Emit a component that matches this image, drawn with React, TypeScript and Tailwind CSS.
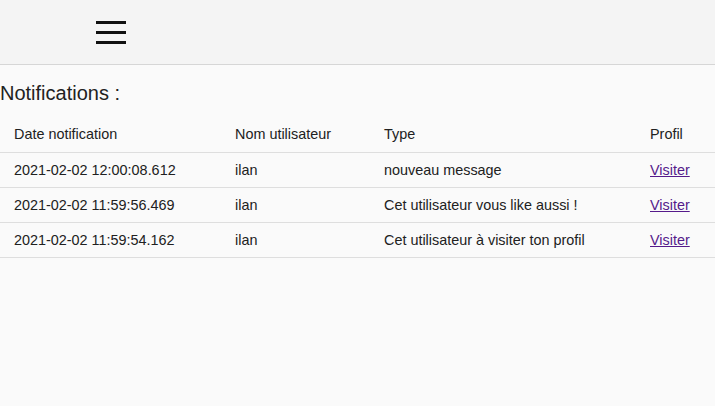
const notifications = [
  { date: "2021-02-02 12:00:08.612", user: "ilan", type: "nouveau message" },
  { date: "2021-02-02 11:59:56.469", user: "ilan", type: "Cet utilisateur vous like aussi !" },
  { date: "2021-02-02 11:59:54.162", user: "ilan", type: "Cet utilisateur à visiter ton profil" },
];

export default function App() {
  return (
    <div className="min-h-[406px] bg-[#fafafa] font-['Liberation_Sans',Arial,sans-serif] text-[#212121]">
      <header className="flex h-[65px] items-start border-b border-[#d6d6d6] bg-[#f4f4f4] pl-[96px] pt-[21px]">
        <button className="flex w-[30px] flex-col gap-[7px]" aria-label="Menu">
          <span className="block h-[3px] w-[30px] bg-[#111]" />
          <span className="block h-[3px] w-[30px] bg-[#111]" />
          <span className="block h-[3px] w-[30px] bg-[#111]" />
        </button>
      </header>
      <h2 className="mt-[16px] text-[20px] leading-[24px] text-[#222]">Notifications :</h2>
      <table className="mt-[11px] w-full table-fixed border-collapse text-[14.4px]">
        <colgroup>
          <col className="w-[221px]" />
          <col className="w-[149px]" />
          <col className="w-[266px]" />
          <col />
        </colgroup>
        <thead>
          <tr className="h-[36px] border-b border-[#dedede] text-left">
            <th className="pl-[14px] pt-[2px] font-normal">Date notification</th>
            <th className="pl-[14px] pt-[2px] font-normal">Nom utilisateur</th>
            <th className="pl-[14px] pt-[2px] font-normal">Type</th>
            <th className="pl-[14px] pt-[2px] font-normal">Profil</th>
          </tr>
        </thead>
        <tbody>
          {notifications.map((n) => (
            <tr key={n.date} className="h-[35px] border-b border-[#dedede]">
              <td className="pl-[14px] pt-[2px]">{n.date}</td>
              <td className="pl-[14px] pt-[2px]">{n.user}</td>
              <td className="pl-[14px] pt-[2px]">{n.type}</td>
              <td className="pl-[14px] pt-[2px]">
                <a href="#" className="text-[#551a8b] underline">
                  Visiter
                </a>
              </td>
            </tr>
          ))}
        </tbody>
      </table>
    </div>
  );
}
